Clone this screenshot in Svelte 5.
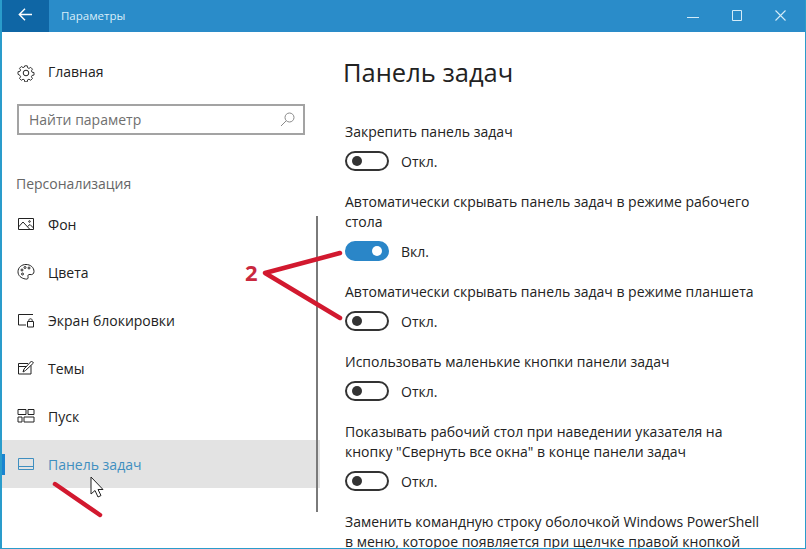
<script>
  const nav = [
    { label: 'Фон', icon: 'bg' },
    { label: 'Цвета', icon: 'palette' },
    { label: 'Экран блокировки', icon: 'lock' },
    { label: 'Темы', icon: 'theme' },
    { label: 'Пуск', icon: 'start' },
    { label: 'Панель задач', icon: 'taskbar', active: true }
  ]

  const settings = [
    { text: 'Закрепить панель задач', on: false },
    { text: 'Автоматически скрывать панель задач в режиме рабочего стола', on: true },
    { text: 'Автоматически скрывать панель задач в режиме планшета', on: false },
    { text: 'Использовать маленькие кнопки панели задач', on: false },
    { text: 'Показывать рабочий стол при наведении указателя на кнопку "Свернуть все окна" в конце панели задач', on: false }
  ]
</script>

<div class="window">
  <header class="titlebar">
    <button class="back" aria-label="Назад">
      <svg width="14" height="13" viewBox="0 0 14 13" fill="none" stroke="#fff" stroke-width="1.4">
        <path d="M7 .8 1.300 6.500 7 12.200M1.300 6.500H14" />
      </svg>
    </button>
    <span class="title">Параметры</span>
    <div class="controls">
      <svg width="12" height="12" viewBox="0 0 12 12" fill="none" stroke="#d4ecf8" stroke-width="1"><path d="M0 7.500h12" /></svg>
      <svg width="10" height="11" viewBox="0 0 10 11" fill="none" stroke="#d4ecf8" stroke-width="1"><path d="M.5.5h9v10h-9z" /></svg>
      <svg width="11" height="11" viewBox="0 0 11 11" fill="none" stroke="#d4ecf8" stroke-width="1.1"><path d="M.5.5l10 10M10.500.5l-10 10" /></svg>
    </div>
  </header>

  <div class="body">
    <aside class="sidebar">
      <div class="home">
        <svg class="icon" width="18" height="18" viewBox="0 0 18 18" fill="none" stroke="#222" stroke-width="1">
          <circle cx="9" cy="9" r="2.800" />
          <path d="M7.600 1h2.800l.4 2.200 1.500.7 1.900-1.200 2 2-1.200 1.900.7 1.500 2.200.4v2.800l-2.200.4-.7 1.500 1.200 1.900-2 2-1.900-1.200-1.500.7-.4 2.200H7.600l-.4-2.200-1.500-.7-1.900 1.200-2-2 1.200-1.900-.7-1.500L.1 10.400V7.600l2.200-.4.7-1.500-1.200-1.900 2-2 1.900 1.200 1.500-.7z" transform="translate(.9 .9) scale(.9)" />
        </svg>
        <span>Главная</span>
      </div>

      <div class="search">
        <span>Найти параметр</span>
        <svg width="15" height="15" viewBox="0 0 15 15" fill="none" stroke="#8a8a8a" stroke-width="1">
          <circle cx="9.500" cy="5.500" r="4.500" />
          <path d="M6.200 8.800 1 14" />
        </svg>
      </div>

      <div class="group">Персонализация</div>

      <nav>
        {#each nav as item}
          <div class="item" class:active={item.active}>
            <svg class="icon" width="18" height="18" viewBox="0 0 18 18" fill="none" stroke={item.active ? '#3f8fc0' : '#222'} stroke-width="1">
              {#if item.icon === 'bg'}
                <path d="M1.500 3.500h15v11h-15zM1.500 12 6 7l7 7.500M10.500 11.500l2.500-2 3.500 3.500" />
                <circle cx="12.500" cy="6.500" r=".8" />
              {:else if item.icon === 'palette'}
                <path d="M9 1.500c4.500 0 8 3 8 7 0 2.500-2 3.500-4 3-1.500-.4-2.500.8-2 2.200.5 1.800-.5 2.800-2.500 2.300C4 15.300 1 12.500 1 8.800 1 4.500 4.500 1.500 9 1.500z" />
                <circle cx="5" cy="7" r="1" />
                <circle cx="8" cy="4.500" r="1" />
                <circle cx="12" cy="5" r="1" />
                <circle cx="5.500" cy="11" r="1" />
              {:else if item.icon === 'lock'}
                <path d="M16 3.500H1.500v10.500H9" />
                <path d="M10.500 10.500h6v5.500h-6zM11.800 10.500V9.300c0-2 3.400-2 3.400 0v1.200" />
              {:else if item.icon === 'theme'}
                <path d="M14 6.500v8.500H1.500V4.500H11" />
                <path d="M1.500 7.500h8M6 13l1-3 7.500-8 2 2-8 7.500z" />
              {:else if item.icon === 'start'}
                <path d="M1 2.500h8v5H1zM11 2.500h6v5h-6zM1 10h4v5H1zM7 10h10v5H7z" />
              {:else}
                <path d="M1.500 3.500h15v11h-15zM1.500 11.500h15" />
              {/if}
            </svg>
            <span>{item.label}</span>
          </div>
        {/each}
      </nav>
    </aside>

    <main class="content">
      <h1>Панель задач</h1>
      {#each settings as s}
        <section class="setting">
          <p>{s.text}</p>
          <div class="switch-row">
            <span class="switch" class:on={s.on}><i></i></span>
            <span>{s.on ? 'Вкл.' : 'Откл.'}</span>
          </div>
        </section>
      {/each}
      <p>Заменить командную строку оболочкой Windows PowerShell в меню, которое появляется при щелчке правой кнопкой</p>
    </main>
  </div>

  <div class="scrollbar"></div>

  <!-- pointer and the red marks sit over the window -->
  <svg class="marks" width="806" height="549" viewBox="0 0 806 549" fill="none">
    <g stroke="#d2192f" stroke-width="4.500" stroke-linecap="round" stroke-linejoin="round">
      <path d="M340 253 265 273l75 45" />
      <path d="M55 484 100 515" />
    </g>
    <path d="M91 477v17l4-3.500 3 6.500 3-1.500-3-6h5z" fill="#fff" stroke="#222" stroke-width="1" />
  </svg>
  <span class="two">2</span>
</div>

<style>
  :global(body) {
    margin: 0;
    background: #fff;
  }

  .window {
    position: relative;
    width: 806px;
    height: 549px;
    overflow: hidden;
    box-sizing: border-box;
    border: solid #2a9ccb;
    border-width: 0 1px 1px 2px;
    font-family: "Open Sans", "Noto Sans", sans-serif;
    font-size: 14px;
    color: #222;
  }

  .titlebar {
    display: flex;
    align-items: center;
    height: 32px;
    margin-left: -2px;
    background: #2a8cc9;
    color: #d9eef9;
    font-size: 11.500px;
  }
  .back {
    display: flex;
    align-items: center;
    justify-content: center;
    width: 49px;
    height: 32px;
    padding: 0 0 3px;
    border: 0;
    background: #0f66a5;
  }
  .title {
    margin: 0 0 2px 12px;
  }
  .controls {
    display: flex;
    align-items: center;
    gap: 33px;
    margin-left: auto;
    margin-right: 19px;
    padding-bottom: 1px;
  }

  .body {
    display: flex;
  }

  .sidebar {
    width: 318px;
    flex-shrink: 0;
  }
  .icon {
    flex-shrink: 0;
    margin-right: 13px;
  }
  .home {
    display: flex;
    align-items: center;
    height: 20px;
    margin-top: 31px;
    margin-bottom: -1px;
    padding-left: 15px;
  }
  .home span {
    margin-bottom: 2px;
    line-height: 20px;
  }
  .search {
    display: flex;
    align-items: center;
    justify-content: space-between;
    box-sizing: border-box;
    width: 288px;
    height: 31px;
    margin: 22px 0 0 15px;
    padding: 0 8px 0 10px;
    border: 2px solid #a3a3a3;
    color: #6f6f6f;
  }
  .group {
    margin: 39px 0 0 14px;
    line-height: 20px;
    color: #666;
  }
  nav {
    margin-top: 6px;
  }
  .item {
    display: flex;
    align-items: center;
    height: 48px;
    padding-left: 15px;
  }
  .item.active {
    position: relative;
    background: #e3e3e3;
    color: #3f8fc0;
  }
  .item.active::before {
    content: "";
    position: absolute;
    left: -2px;
    top: 14px;
    width: 5px;
    height: 21px;
    background: #1a84d0;
  }

  .content {
    flex: 1;
    padding-left: 25px;
  }
  h1 {
    margin: 21px 0 31px -2px;
    font-size: 25.500px;
    font-weight: 400;
    line-height: 38px;
  }
  .setting {
    margin-bottom: 21px;
  }
  p {
    width: 425px;
    margin: 0;
    line-height: 20px;
  }
  .switch-row {
    display: flex;
    align-items: center;
    gap: 12px;
    height: 20px;
    margin-top: 9px;
  }
  .switch {
    display: flex;
    align-items: center;
    box-sizing: border-box;
    width: 44px;
    height: 20px;
    padding-left: 5px;
    border: 2px solid #333;
    border-radius: 10px;
  }
  .switch i {
    width: 10px;
    height: 10px;
    border-radius: 50%;
    background: #333;
  }
  .switch.on {
    justify-content: flex-end;
    padding: 0 5px 0 0;
    border-color: #2a86c8;
    background: #2a86c8;
  }
  .switch.on i {
    background: #fff;
  }

  .scrollbar {
    position: absolute;
    left: 314px;
    top: 216px;
    width: 2px;
    height: 296px;
    background: #7a7a7a;
  }
  .marks {
    position: absolute;
    left: -2px;
    top: 0;
    pointer-events: none;
  }
  .two {
    position: absolute;
    left: 243px;
    top: 257px;
    font-size: 22px;
    font-weight: 700;
    line-height: 30px;
    color: #c9283e;
  }
</style>
